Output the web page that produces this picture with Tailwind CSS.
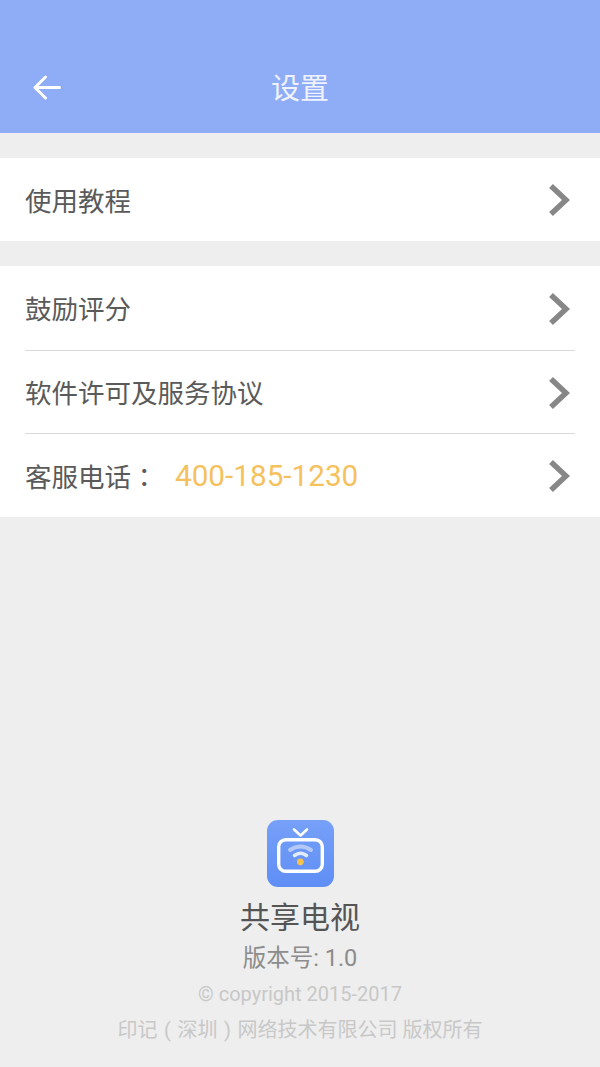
<!DOCTYPE html>
<html lang="zh">
<head>
<meta charset="utf-8">
<script src="https://cdn.jsdelivr.net/npm/@tailwindcss/browser@4"></script>
</head>
<body class="m-0">
<div class="w-[600px] h-[1067px] bg-[#eeeeee] flex flex-col font-['Roboto','Noto_Sans_CJK_SC',sans-serif] overflow-hidden">
  <header class="h-[133px] bg-[#8eadf6] relative flex items-end justify-center pb-[24px] shrink-0">
    <svg class="absolute left-[32px] top-[74px]" width="30" height="27" viewBox="0 0 30 27" fill="none" stroke="#fff" stroke-width="3" stroke-linecap="round" stroke-linejoin="round"><path d="M3 13.5H27.5M13.5 3L3 13.5L13.5 24"/></svg>
    <h1 class="text-[29px] leading-[40px] font-normal text-[#f0f3fd]">设置</h1>
  </header>

  <section class="mt-[25px] bg-white">
    <div class="h-[83px] pl-[25px] pr-[30px] flex items-center justify-between">
      <span class="text-[26.5px] pt-[5px] text-[#5a5a5a]">使用教程</span>
      <svg width="22" height="34" viewBox="0 0 22 34" fill="none" stroke="#878787" stroke-width="5.5"><path d="M3 3L18 17L3 31"/></svg>
    </div>
  </section>

  <section class="mt-[25px] bg-white">
    <div class="ml-[25px] mr-[25px] pr-[5px] h-[85px] flex items-center justify-between border-b border-[#d9d9d9]">
      <span class="text-[26.5px] pt-[4px] text-[#5a5a5a]">鼓励评分</span>
      <svg class="mt-[1px]" width="22" height="34" viewBox="0 0 22 34" fill="none" stroke="#878787" stroke-width="5.5"><path d="M3 3L18 17L3 31"/></svg>
    </div>
    <div class="ml-[25px] mr-[25px] pr-[5px] h-[83px] flex items-center justify-between border-b border-[#d9d9d9]">
      <span class="text-[26.5px] pt-[3px] text-[#5a5a5a]">软件许可及服务协议</span>
      <svg class="mt-[1px]" width="22" height="34" viewBox="0 0 22 34" fill="none" stroke="#878787" stroke-width="5.5"><path d="M3 3L18 17L3 31"/></svg>
    </div>
    <div class="ml-[25px] mr-[25px] pr-[5px] h-[83px] flex items-center justify-between">
      <span class="flex items-center">
        <span class="text-[26.5px] pt-[3px] text-[#5a5a5a] w-[150px]">客服电话<span lang="zh-TW" class="font-['Noto_Sans_CJK_TC'] [text-spacing-trim:space-all]">：</span></span>
        <span class="text-[29.7px] pt-[1px] text-[#f5c15d]">400-185-1230</span>
      </span>
      <svg width="22" height="34" viewBox="0 0 22 34" fill="none" stroke="#878787" stroke-width="5.5"><path d="M3 3L18 17L3 31"/></svg>
    </div>
  </section>

  <footer class="mt-auto pb-[20px] flex flex-col items-center">
    <svg width="67" height="67" viewBox="0 0 67 67" class="mb-[9px]">
      <defs><linearGradient id="g" x1="0" y1="0" x2="0" y2="1"><stop offset="0" stop-color="#76a0f8"/><stop offset="1" stop-color="#5f8ef5"/></linearGradient></defs>
      <rect width="67" height="67" rx="11" fill="url(#g)"/>
      <path d="M27 9.5L33.5 15.5L40 9.5" fill="none" stroke="#fff" stroke-width="2.6" stroke-linecap="round" stroke-linejoin="round"/>
      <rect x="11.7" y="19.7" width="43.6" height="31.6" rx="7" fill="none" stroke="#fff" stroke-width="3.4"/>
      <path d="M23 30Q33.5 23 44 30" fill="none" stroke="#b5c9f8" stroke-width="4" stroke-linecap="round"/>
      <path d="M27.5 35.5Q33.5 31 39.5 35.5" fill="none" stroke="#e3ebfd" stroke-width="3.6" stroke-linecap="round"/>
      <circle cx="33.3" cy="41.8" r="3.4" fill="#f7c14e"/>
    </svg>
    <div class="text-[30px] leading-[44px] text-[#555]">共享电视</div>
    <div class="text-[23.5px] leading-[36px] text-[#8c8c8c]">版本号: 1.0</div>
    <div class="text-[20px] leading-[36px] text-[#c8c8c8]">© copyright 2015-2017</div>
    <div class="text-[20px] h-[35px] leading-[36px] text-[#c8c8c8]">印记<span class="inline-block w-[20px] text-center leading-none">(</span>深圳<span class="inline-block w-[20px] text-center leading-none">)</span>网络技术有限公司 版权所有</div>
  </footer>
</div>
</body>
</html>
